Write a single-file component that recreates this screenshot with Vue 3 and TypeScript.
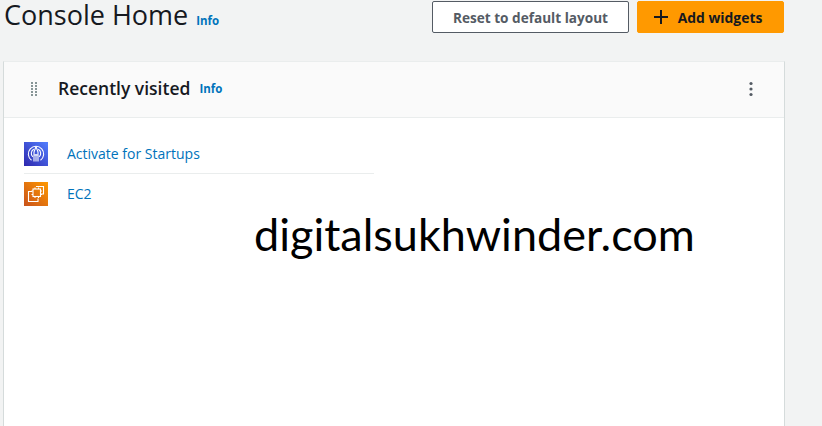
<template>
  <div class="page">
    <header class="page-head">
      <div class="title-wrap">
        <h1>Console Home</h1>
        <a class="info info-head" href="#">Info</a>
      </div>
      <div class="actions">
        <button class="btn btn-normal" type="button">Reset to default layout</button>
        <button class="btn btn-primary" type="button">
          <svg width="16" height="16" viewBox="0 0 16 16" aria-hidden="true">
            <path d="M8 1v14M1 8h14" stroke="#16191f" stroke-width="2" fill="none" />
          </svg>
          Add widgets
        </button>
      </div>
    </header>

    <section class="card">
      <div class="card-head">
        <svg class="drag" width="10" height="16" viewBox="0 0 10 16" aria-hidden="true">
          <g fill="#879596">
            <template v-for="row in 5" :key="row">
              <rect x="1" :y="row * 3 - 2" width="2" height="2" />
              <rect x="5" :y="row * 3 - 2" width="2" height="2" />
            </template>
          </g>
        </svg>
        <h2>Recently visited</h2>
        <a class="info" href="#">Info</a>
        <svg class="more" width="4" height="16" viewBox="0 0 4 16" aria-hidden="true">
          <circle cx="2" cy="2.500" r="1.600" fill="#545b64" />
          <circle cx="2" cy="8" r="1.600" fill="#545b64" />
          <circle cx="2" cy="13.500" r="1.600" fill="#545b64" />
        </svg>
      </div>

      <ul class="visited">
        <li v-for="item in visited" :key="item.name">
          <span class="svc-icon" :class="item.tone">
            <svg v-if="item.tone === 'startups'" width="24" height="24" viewBox="0 0 24 24" aria-hidden="true">
              <g fill="none" stroke="#fff" stroke-width="1.100">
                <path d="M7.500 18.200a7.700 7.700 0 1 1 9 0" />
                <path d="M8.800 14.800a4.600 4.600 0 0 1 1-7.500M15.200 14.800a4.600 4.600 0 0 0-1-7.500" />
                <path d="M12 4.500l-2 5.500v9.500M12 4.500l2 5.500v9.500M12 12v7.500M10 13h4" />
              </g>
            </svg>
            <svg v-else width="24" height="24" viewBox="0 0 24 24" aria-hidden="true">
              <g fill="none" stroke="#fff" stroke-width="1.100">
                <path d="M12 4.500h7.500v7.500H17" />
                <path d="M8 9.500H4.500v10H14v-3" />
                <rect x="9" y="7" width="7.500" height="7.500" />
                <path d="M11 5.500V7M14.500 5.500V7M11 14.500V16M14.500 14.500V16M7.500 9h1.500M7.500 12.500h1.500M16.500 9H18M16.500 12.500H18" />
              </g>
            </svg>
          </span>
          <a class="svc-link" href="#">{{ item.name }}</a>
        </li>
      </ul>
    </section>

    <div class="watermark">digitalsukhwinder.com</div>
  </div>
</template>

<script setup lang="ts">
interface Visited {
  name: string
  tone: 'startups' | 'compute'
}

const visited: Visited[] = [
  { name: 'Activate for Startups', tone: 'startups' },
  { name: 'EC2', tone: 'compute' },
]
</script>

<style>
html,
body {
  margin: 0;
  background: #f2f3f3;
  overflow: hidden;
}
</style>

<style scoped>
.page {
  position: relative;
  width: 822px;
  height: 426px;
  overflow: hidden;
  font-family: "Open Sans", "Noto Sans", "Liberation Sans", sans-serif;
  color: #16191f;
  background: #f2f3f3;
}

.page-head {
  display: flex;
  justify-content: space-between;
  height: 61px;
  padding: 1px 38px 0 4px;
  box-sizing: border-box;
}

.title-wrap {
  display: flex;
  align-items: baseline;
  gap: 8px;
  height: 34px;
}

h1 {
  margin: 0;
  font-size: 27px;
  line-height: 28px;
  font-weight: 400;
  color: #16191f;
}

.info {
  font-size: 11.5px;
  font-weight: 700;
  color: #0073bb;
  text-decoration: none;
}

.actions {
  display: flex;
  gap: 8px;
}

.btn {
  height: 32px;
  box-sizing: border-box;
  border-radius: 2px;
  font-family: inherit;
  font-size: 13.6px;
  font-weight: 700;
  display: flex;
  align-items: center;
  justify-content: center;
}

.btn-normal {
  width: 197px;
  background: #fff;
  border: 1px solid #545b64;
  color: #545b64;
}

.btn-primary {
  width: 147px;
  gap: 9px;
  padding: 0 6px 0 0;
  font-size: 13.9px;
  background: #ff9900;
  border: 1px solid #ff9900;
  color: #16191f;
}

.card {
  margin-left: 3px;
  width: 782px;
  height: 380px;
  box-sizing: border-box;
  background: #fff;
  border-top: 1px solid #eaeded;
  border-left: 1px solid #d5dbdb;
  border-right: 1px solid #d5dbdb;
}

.card-head {
  display: flex;
  align-items: center;
  height: 56px;
  box-sizing: border-box;
  padding: 0 31px 2px 26px;
  background: #fafafa;
  border-bottom: 1px solid #eaeded;
}

.drag {
  margin-right: 18px;
}

h2 {
  margin: 0 9px 2px 0;
  font-size: 17.5px;
  font-weight: 600;
  color: #16191f;
}

.more {
  margin-left: auto;
}

.visited {
  list-style: none;
  margin: 16px 0 0 20px;
  padding: 0;
  width: 350px;
}

.visited li {
  display: flex;
  align-items: center;
  gap: 19px;
  height: 39px;
  border-bottom: 1px solid #eaeded;
}

.visited li:last-child {
  border-bottom: none;
}

.svc-icon {
  width: 24px;
  height: 24px;
  display: block;
}

.svc-icon svg {
  display: block;
}

.startups {
  background: linear-gradient(45deg, #2e27ad, #527fff);
}

.compute {
  background: linear-gradient(45deg, #c8511b, #ff9900);
}

.svc-link {
  font-size: 14px;
  color: #0073bb;
  text-decoration: none;
}

.watermark {
  position: absolute;
  left: 254px;
  top: 207px;
  font-family: Lato, "Open Sans", sans-serif;
  font-size: 45px;
  line-height: 54px;
  color: #000;
}
</style>
